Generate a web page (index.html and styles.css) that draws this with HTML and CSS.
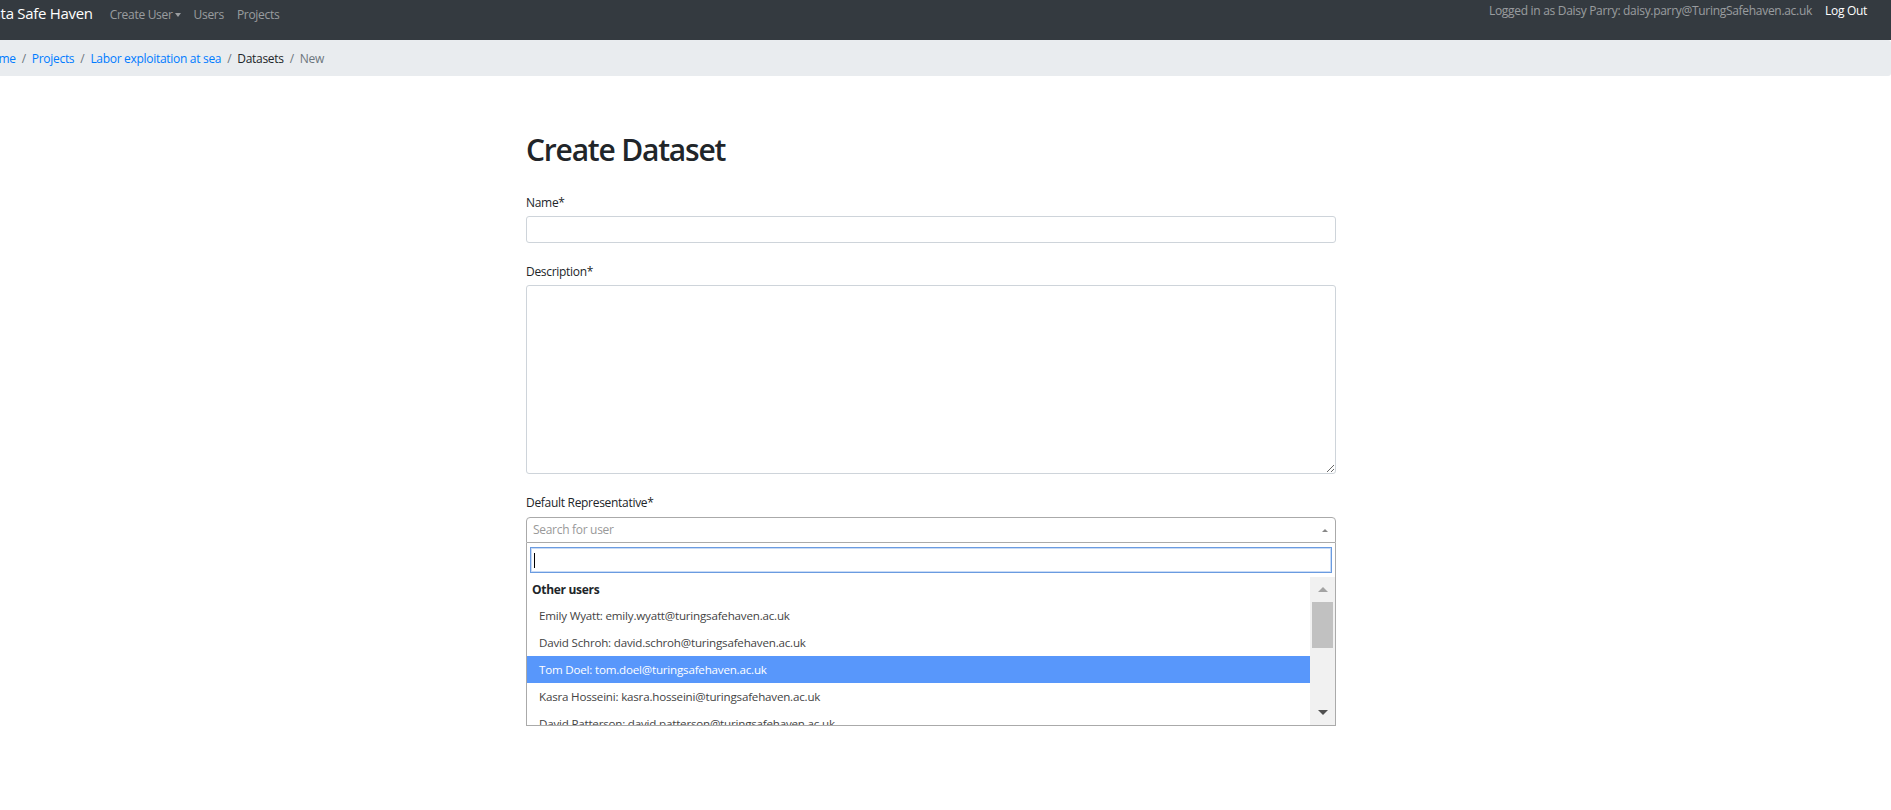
FILE: index.html
```html
<!DOCTYPE html>
<html lang="en">
<head>
<meta charset="utf-8">
<title>Create Dataset</title>
<link rel="stylesheet" href="styles.css">
</head>
<body>
<nav class="navbar">
  <div class="nav-left">
    <a class="brand" href="#">Data Safe Haven</a>
    <a class="nav-link" href="#">Create User<span class="caret"></span></a>
    <a class="nav-link" href="#">Users</a>
    <a class="nav-link" href="#">Projects</a>
  </div>
  <div class="nav-right">
    <span class="nav-text">Logged in as Daisy Parry: daisy.parry@TuringSafehaven.ac.uk</span>
    <a class="nav-link logout" href="#">Log Out</a>
  </div>
</nav>
<nav class="crumbs">
  <ol class="crumb-list">
    <li><a href="#">Home</a></li>
    <li class="sep">/</li>
    <li><a href="#">Projects</a></li>
    <li class="sep">/</li>
    <li><a href="#">Labor exploitation at sea</a></li>
    <li class="sep">/</li>
    <li class="plain">Datasets</li>
    <li class="sep">/</li>
    <li class="active">New</li>
  </ol>
</nav>
<main class="page">
  <h1 class="title">Create Dataset</h1>
  <form class="form">
    <div class="group">
      <label class="label">Name*</label>
      <input class="control" type="text">
    </div>
    <div class="group">
      <label class="label">Description*</label>
      <textarea class="control area"></textarea>
    </div>
    <div class="group">
      <label class="label">Default Representative*</label>
      <div class="select">
        <div class="select-box">
          <span class="placeholder">Search for user</span>
          <span class="arrow"></span>
        </div>
        <div class="dropdown">
          <div class="search-wrap">
            <div class="search"><span class="cursor"></span></div>
          </div>
          <div class="results-wrap">
            <ul class="results">
              <li class="group-label">Other users</li>
              <li class="option">Emily Wyatt: emily.wyatt@turingsafehaven.ac.uk</li>
              <li class="option">David Schroh: david.schroh@turingsafehaven.ac.uk</li>
              <li class="option highlighted">Tom Doel: tom.doel@turingsafehaven.ac.uk</li>
              <li class="option">Kasra Hosseini: kasra.hosseini@turingsafehaven.ac.uk</li>
              <li class="option">David Patterson: david.patterson@turingsafehaven.ac.uk</li>
            </ul>
            <div class="scrollbar">
              <div class="sb-btn"><span class="tri-up"></span></div>
              <div class="sb-thumb"></div>
              <div class="sb-fill"></div>
              <div class="sb-btn"><span class="tri-down"></span></div>
            </div>
          </div>
        </div>
      </div>
    </div>
  </form>
</main>
</body>
</html>
```
FILE: styles.css
```css
html {
  overflow: hidden;
  background: #fff;
}
body {
  margin: 0 0 0 -29px;
  width: 1920px;
  font-family: "Segoe UI", "Open Sans", sans-serif;
  font-size: 12px;
  letter-spacing: -0.3px;
  line-height: 1.5;
  color: #212529;
}
a {
  text-decoration: none;
}

/* navbar */
.navbar {
  height: 40px;
  background: #343a40;
  display: flex;
  align-items: flex-start;
  justify-content: space-between;
  padding: 2px 24px 0 11px;
  box-sizing: border-box;
}
.nav-left,
.nav-right {
  display: flex;
  align-items: baseline;
  gap: 13px;
}
.brand {
  color: #fff;
  font-size: 15px;
  letter-spacing: -0.3px;
  margin-right: 4px;
}
.nav-link {
  color: rgba(255, 255, 255, 0.5);
}
.nav-text {
  color: rgba(255, 255, 255, 0.5);
}
.logout {
  color: #fff;
}
.caret {
  display: inline-block;
  vertical-align: 2px;
  width: 0;
  height: 0;
  border-left: 3.5px solid transparent;
  border-right: 3.5px solid transparent;
  border-top: 4px solid rgba(255, 255, 255, 0.5);
  margin-left: 2px;
}

/* breadcrumb */
.crumbs {
  background: #e9ecef;
  height: 36px;
  border-radius: 3px;
  display: flex;
  align-items: center;
  padding: 1px 0 0 12px;
  box-sizing: border-box;
}
.crumb-list {
  list-style: none;
  margin: 0;
  padding: 0;
  display: flex;
}
.crumb-list a {
  color: #007bff;
}
.sep {
  color: #6c757d;
  padding: 0 6px;
}
.plain {
  color: #212529;
}
.active {
  color: #6c757d;
}

/* page */
.page {
  width: 810px;
  margin: 56px auto 0;
}
.title {
  font-size: 30px;
  font-weight: 600;
  letter-spacing: -1.2px;
  line-height: 1.2;
  margin: 0 0 26px;
}
.group {
  display: flex;
  flex-direction: column;
  margin-bottom: 20px;
}
.label {
  line-height: 18px;
  margin-bottom: 4px;
}
.control {
  box-sizing: border-box;
  height: 27px;
  border: 1px solid #ced4da;
  border-radius: 3px;
  font: inherit;
  background: #fff;
}
.area {
  height: 189px;
  resize: vertical;
}

/* select2 */
.select {
  display: flex;
  flex-direction: column;
  margin-top: 1px;
}
.select-box {
  box-sizing: border-box;
  height: 26px;
  border: 1px solid #aaa;
  border-radius: 4px 4px 0 0;
  display: flex;
  align-items: center;
  justify-content: space-between;
  padding: 0 6px;
}
.placeholder {
  color: #999;
}
.arrow {
  width: 0;
  height: 0;
  border-left: 3px solid transparent;
  border-right: 3px solid transparent;
  border-bottom: 3px solid #888;
  margin-right: 1px;
}
.dropdown {
  border: 1px solid #aaa;
  border-top: none;
  color: #444;
}
.search-wrap {
  padding: 4px 3px;
}
.search {
  box-sizing: border-box;
  height: 26px;
  border: 1px solid #6a9be0;
  box-shadow: 0 0 0 1px #c9dbf6 inset;
  display: flex;
  align-items: center;
  padding-left: 3px;
}
.cursor {
  width: 1px;
  height: 15px;
  background: #000;
}
.results-wrap {
  display: flex;
  height: 148px;
}
.results {
  flex: 1;
  list-style: none;
  margin: 0;
  padding: 0;
  overflow: hidden;
}
.group-label {
  height: 25px;
  line-height: 25px;
  padding-left: 5px;
  font-weight: 700;
  color: #212529;
}
.option {
  height: 27px;
  line-height: 27px;
  padding-left: 12px;
  font-size: 11.6px;
  letter-spacing: -0.2px;
  white-space: nowrap;
}
.highlighted {
  background: #5897fb;
  color: #fff;
}
.scrollbar {
  width: 25px;
  background: #f1f1f1;
  display: flex;
  flex-direction: column;
}
.sb-btn {
  height: 25px;
  display: flex;
  align-items: center;
  justify-content: center;
}
.tri-up {
  width: 0;
  height: 0;
  border-left: 5px solid transparent;
  border-right: 5px solid transparent;
  border-bottom: 5px solid #a3a3a3;
}
.tri-down {
  width: 0;
  height: 0;
  border-left: 5px solid transparent;
  border-right: 5px solid transparent;
  border-top: 5px solid #505050;
}
.sb-thumb {
  height: 46px;
  margin: 0 2px;
  background: #c1c1c1;
}
.sb-fill {
  flex: 1;
}
```
